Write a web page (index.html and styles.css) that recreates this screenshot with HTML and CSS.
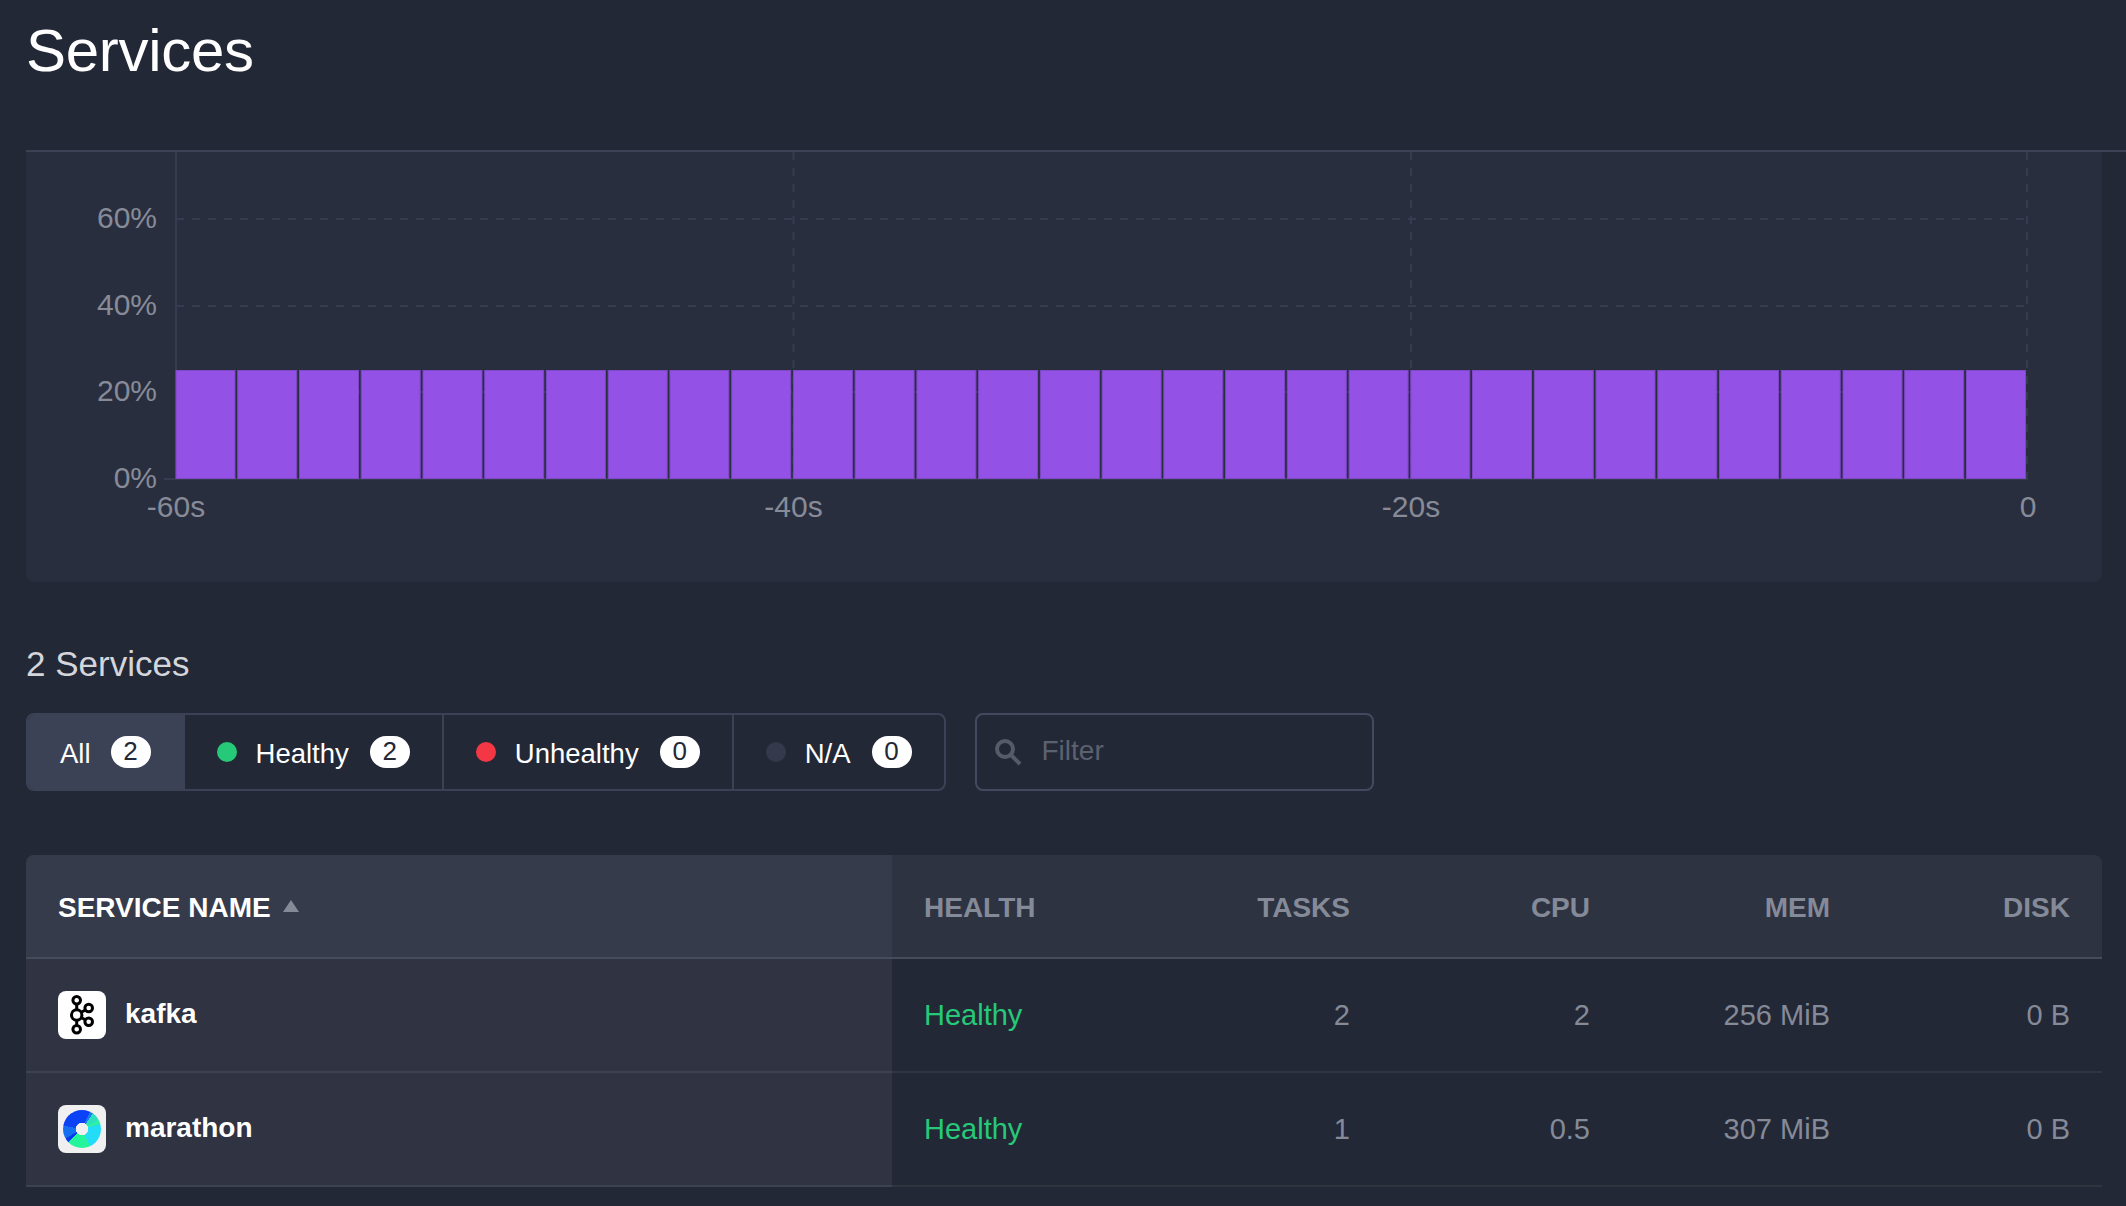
FILE: index.html
```html
<!DOCTYPE html>
<html lang="en">
<head>
  <meta charset="UTF-8">
  <title>Services</title>
  <link rel="stylesheet" href="styles.css">
</head>
<body>
  <header class="page-header">
    <h1>Services</h1>
  </header>

  <section class="chart-wrap">
    <div class="chart-panel">
      <svg class="chart" viewBox="26 152 2076 430" width="2076" height="430">
        <g class="grid">
          <line x1="176" y1="219" x2="2027" y2="219"/>
          <line x1="176" y1="306" x2="2027" y2="306"/>
          <line x1="176" y1="392" x2="2027" y2="392"/>
          <line x1="793.5" y1="152" x2="793.5" y2="479"/>
          <line x1="1411" y1="152" x2="1411" y2="479"/>
          <line x1="2027" y1="152" x2="2027" y2="479"/>
        </g>
        <line class="axis" x1="176" y1="152" x2="176" y2="479"/>
        <line class="axis" x1="164" y1="479" x2="2028" y2="479"/>
        <g class="bars">
          <rect x="176" width="59"/><rect x="237.7" width="59"/><rect x="299.5" width="59"/>
          <rect x="361.2" width="59"/><rect x="423" width="59"/><rect x="484.7" width="59"/>
          <rect x="546.4" width="59"/><rect x="608.2" width="59"/><rect x="669.9" width="59"/>
          <rect x="731.7" width="59"/><rect x="793.4" width="59"/><rect x="855.1" width="59"/>
          <rect x="916.9" width="59"/><rect x="978.6" width="59"/><rect x="1040.4" width="59"/>
          <rect x="1102.1" width="59"/><rect x="1163.8" width="59"/><rect x="1225.6" width="59"/>
          <rect x="1287.3" width="59"/><rect x="1349.1" width="59"/><rect x="1410.8" width="59"/>
          <rect x="1472.5" width="59"/><rect x="1534.3" width="59"/><rect x="1596" width="59"/>
          <rect x="1657.8" width="59"/><rect x="1719.5" width="59"/><rect x="1781.2" width="59"/>
          <rect x="1843" width="59"/><rect x="1904.7" width="59"/><rect x="1966.5" width="59"/>
        </g>
        <g class="labels y-labels">
          <text x="157" y="228">60%</text>
          <text x="157" y="315">40%</text>
          <text x="157" y="401">20%</text>
          <text x="157" y="488">0%</text>
        </g>
        <g class="labels x-labels">
          <text x="176" y="517">-60s</text>
          <text x="793.5" y="517">-40s</text>
          <text x="1411" y="517">-20s</text>
          <text x="2028" y="517">0</text>
        </g>
      </svg>
    </div>
  </section>

  <h2 class="count">2 Services</h2>

  <div class="toolbar">
    <div class="tabs">
      <div class="tab active"><span class="tab-label">All</span><span class="pill">2</span></div>
      <div class="tab"><i class="dot green"></i><span class="tab-label">Healthy</span><span class="pill">2</span></div>
      <div class="tab"><i class="dot red"></i><span class="tab-label">Unhealthy</span><span class="pill">0</span></div>
      <div class="tab"><i class="dot grey"></i><span class="tab-label">N/A</span><span class="pill">0</span></div>
    </div>
    <div class="filter">
      <svg class="search-icon" viewBox="0 0 28 28" width="28" height="28">
        <circle cx="11" cy="11" r="8"/>
        <line x1="17" y1="17" x2="26" y2="26"/>
      </svg>
      <span>Filter</span>
    </div>
  </div>

  <div class="table-wrap">
    <table>
      <thead>
        <tr>
          <th class="name-col sorted">SERVICE NAME <i class="caret"></i></th>
          <th class="health-col">HEALTH</th>
          <th class="num">TASKS</th>
          <th class="num">CPU</th>
          <th class="num">MEM</th>
          <th class="num">DISK</th>
        </tr>
      </thead>
      <tbody>
        <tr>
          <td class="name-col">
            <div class="service">
              <span class="app-icon">
                <svg viewBox="0 0 48 48" width="48" height="48">
                  <g class="kafka">
                    <line x1="18.7" y1="9.3" x2="18.7" y2="38.3"/>
                    <line x1="18.7" y1="24" x2="30.7" y2="17"/>
                    <line x1="18.7" y1="24" x2="30.7" y2="30.7"/>
                    <circle cx="18.7" cy="9.3" r="3.8"/>
                    <circle cx="18.7" cy="24" r="5.2"/>
                    <circle cx="18.7" cy="38.3" r="3.8"/>
                    <circle cx="30.7" cy="17" r="3.8"/>
                    <circle cx="30.7" cy="30.7" r="3.8"/>
                  </g>
                </svg>
              </span>
              <span class="service-name">kafka</span>
            </div>
          </td>
          <td class="healthy">Healthy</td>
          <td class="num">2</td>
          <td class="num">2</td>
          <td class="num">256 MiB</td>
          <td class="num">0 B</td>
        </tr>
        <tr>
          <td class="name-col">
            <div class="service">
              <span class="app-icon marathon"><i class="disc"></i></span>
              <span class="service-name">marathon</span>
            </div>
          </td>
          <td class="healthy">Healthy</td>
          <td class="num">1</td>
          <td class="num">0.5</td>
          <td class="num">307 MiB</td>
          <td class="num">0 B</td>
        </tr>
      </tbody>
    </table>
  </div>
</body>
</html>
```

FILE: styles.css
```css
* {
  box-sizing: border-box;
}
html, body {
  height: 100%;
}
body {
  margin: 0;
  background-color: #232836;
  color: #fff;
  font-family: "Liberation Sans", Arial, sans-serif;
  overflow: hidden;
}
.page-header {
  height: 150px;
  padding: 14px 0 0 26px;
}
h1 {
  margin: 0;
  font-size: 60px;
  font-weight: 400;
  line-height: 74px;
  letter-spacing: -0.3px;
}
.chart-wrap {
  margin-left: 26px;
  border-top: 2px solid #3b4256;
}
.chart-panel {
  width: 2076px;
  height: 430px;
  background-color: #292e3e;
  border-radius: 0 0 8px 8px;
}
.chart {
  display: block;
}
.grid line {
  stroke: #363c50;
  stroke-width: 2;
  stroke-dasharray: 8 8;
}
.axis {
  stroke: #363c50;
  stroke-width: 2;
}
.bars rect {
  y: 370.5px;
  height: 108px;
  fill: #9351e5;
  stroke: #7d47c6;
  stroke-width: 1;
}
.labels text {
  fill: #878b98;
  font-size: 30px;
}
.y-labels text {
  text-anchor: end;
}
.x-labels text {
  text-anchor: middle;
}
.count {
  margin: 61px 0 0 26px;
  height: 70px;
  font-size: 35px;
  line-height: 41px;
  font-weight: 400;
  color: #d5d6db;
}
.toolbar {
  display: flex;
  margin-left: 26px;
  gap: 29px;
}
.tabs {
  display: flex;
  height: 78px;
  border: 2px solid #3b4256;
  border-radius: 8px;
  overflow: hidden;
}
.tab {
  display: flex;
  align-items: center;
  padding: 0 32px;
  font-size: 27.5px;
  border-left: 2px solid #3b4256;
}
.tab:first-child {
  border-left: none;
}
.tab.active {
  background-color: #3b4256;
}
.tab-label {
  padding-top: 3px;
}
.dot {
  width: 20px;
  height: 20px;
  border-radius: 50%;
  margin-right: 19px;
}
.dot + .tab-label {
  margin-right: 1px;
}
.dot.green {
  background-color: #26c978;
}
.dot.red {
  background-color: #f33745;
}
.dot.grey {
  background-color: #343a4c;
}
.pill {
  width: 40px;
  height: 32px;
  margin-left: 20px;
  border-radius: 16px;
  background-color: #fff;
  color: #232836;
  font-size: 26px;
  line-height: 31px;
  text-align: center;
}
.filter {
  display: flex;
  align-items: center;
  width: 399px;
  height: 78px;
  padding-left: 17px;
  border: 2px solid #434a60;
  border-radius: 8px;
  color: #5c6170;
  font-size: 28px;
}
.filter span {
  padding-bottom: 2px;
}
.search-icon {
  margin-right: 20px;
  fill: none;
  stroke: #565b6a;
  stroke-width: 4;
}
.table-wrap {
  margin: 64px 24px 0 26px;
  border-radius: 8px 8px 0 0;
  overflow: hidden;
}
table {
  width: 100%;
  border-collapse: collapse;
  table-layout: fixed;
}
th {
  height: 103px;
  padding: 4px 32px 0;
  background-color: #2e3341;
  border-bottom: 2px solid #474c5c;
  color: #858a98;
  font-size: 28px;
  font-weight: 700;
  text-align: left;
}
th.sorted {
  background-color: #363b4b;
  color: #fff;
}
td {
  height: 114px;
  padding: 0 32px;
  border-bottom: 2px solid #30353f;
  color: #858a98;
  font-size: 29px;
}
td.name-col {
  background-color: #2f3342;
  border-bottom-color: #3d4250;
}
.name-col {
  width: 866px;
}
.health-col {
  width: 250px;
}
.num {
  width: 240px;
  text-align: right;
}
.healthy {
  color: #26c978;
}
.caret {
  display: inline-block;
  width: 0;
  height: 0;
  margin-left: 5px;
  vertical-align: 5px;
  border-left: 8px solid transparent;
  border-right: 8px solid transparent;
  border-bottom: 12px solid #858a98;
}
.service {
  display: flex;
  align-items: center;
  gap: 19px;
  color: #fff;
  font-size: 28px;
  font-weight: 700;
}
.service-name {
  padding-bottom: 3px;
}
.app-icon {
  display: flex;
  align-items: center;
  justify-content: center;
  width: 48px;
  height: 48px;
  border-radius: 8px;
  background-color: #fff;
}
.kafka line, .kafka circle {
  stroke: #000;
  stroke-width: 3;
}
.kafka circle {
  fill: #fff;
}
.marathon {
  background-color: #f0f0f0;
}
.disc {
  width: 38px;
  height: 38px;
  border-radius: 50%;
  background:
    radial-gradient(circle, #f0f0f0 6px, transparent 6.5px),
    conic-gradient(#0b42f5 0 25deg, #1a7bf0 25deg 35deg, #2ce0c0 35deg 60deg, #2cf0a8 60deg 75deg, #22dcf8 75deg 155deg, #25f59a 155deg 225deg, #0a3af0 225deg 240deg, #1470f0 240deg 280deg, #0b42f5 280deg 360deg);
}
```
